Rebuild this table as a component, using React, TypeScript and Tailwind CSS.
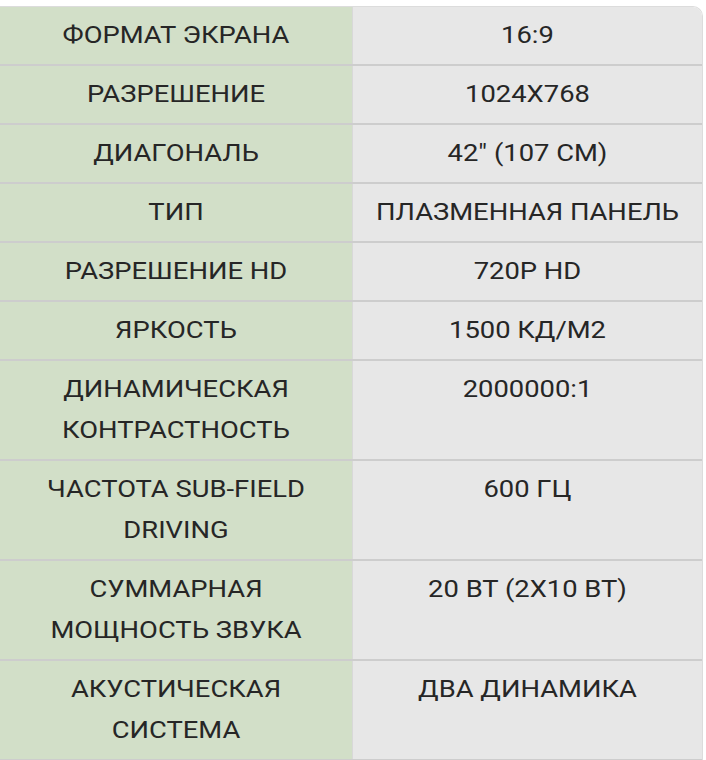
const rows: [string[], string][] = [
  [['ФОРМАТ ЭКРАНА'], '16:9'],
  [['РАЗРЕШЕНИЕ'], '1024X768'],
  [['ДИАГОНАЛЬ'], '42" (107 СМ)'],
  [['ТИП'], 'ПЛАЗМЕННАЯ ПАНЕЛЬ'],
  [['РАЗРЕШЕНИЕ HD'], '720P HD'],
  [['ЯРКОСТЬ'], '1500 КД/М2'],
  [['ДИНАМИЧЕСКАЯ', 'КОНТРАСТНОСТЬ'], '2000000:1'],
  [['ЧАСТОТА SUB-FIELD', 'DRIVING'], '600 ГЦ'],
  [['СУММАРНАЯ', 'МОЩНОСТЬ ЗВУКА'], '20 ВТ (2X10 ВТ)'],
  [['АКУСТИЧЕСКАЯ', 'СИСТЕМА'], 'ДВА ДИНАМИКА'],
]

// text in the shot is a little wider than plain Roboto
function Txt({ children }: { children: string }) {
  return <div className="scale-x-[1.14]">{children}</div>
}

export default function App() {
  return (
    <div className="h-[760px] w-[706px] overflow-hidden bg-white pt-[6px] pr-[3px] font-['Roboto',sans-serif] text-[24px] leading-[41px] text-[#262626]">
      <div className="overflow-hidden rounded-tr-[10px] border-r border-t border-[#dcdcdc]">
        {rows.map(([label, value], i) => (
          <div
            key={i}
            className="grid grid-cols-[352px_1fr] border-b-2 border-[#cdcdcd]"
          >
            <div className="bg-[#d2dfc8] px-2 py-[8px] text-center">
              {label.map((l) => (
                <Txt key={l}>{l}</Txt>
              ))}
            </div>
            <div className="border-l border-[#d8d8d8] bg-[#e7e7e7] px-2 py-[8px] text-center">
              <Txt>{value}</Txt>
            </div>
          </div>
        ))}
      </div>
    </div>
  )
}
